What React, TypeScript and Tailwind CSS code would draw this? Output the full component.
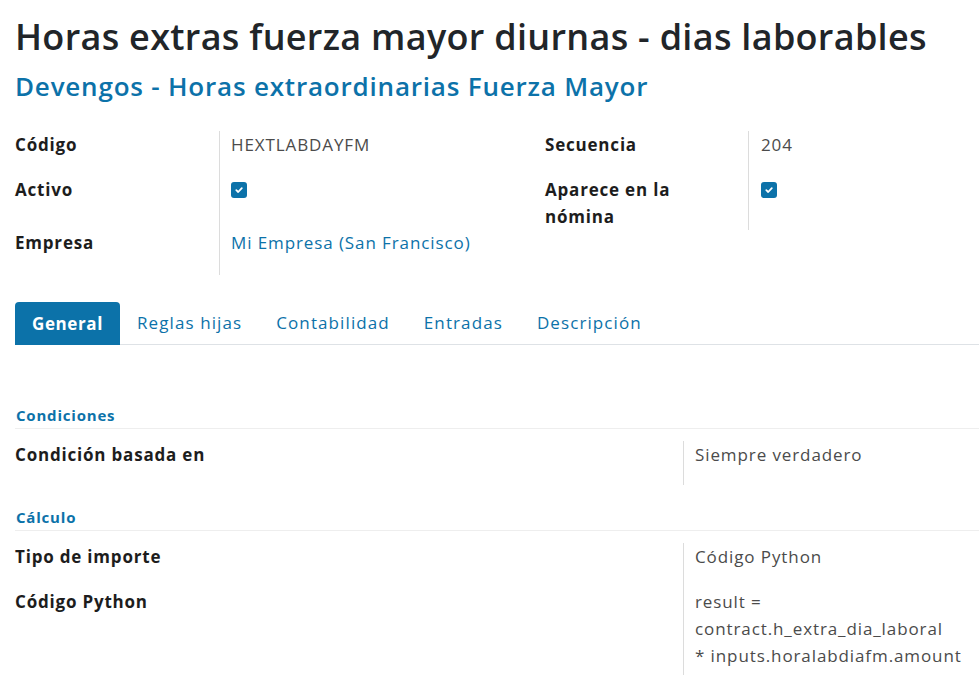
import React from "react";

const Check = () => (
  <span className="inline-flex items-center justify-center w-4 h-4 rounded-[3px] bg-[#0c72a9]">
    <svg width="10" height="10" viewBox="0 0 10 10" fill="none">
      <path d="M2.3 5.2 L4.2 7 L7.8 3.2" stroke="white" strokeWidth="1.8" strokeLinecap="round" strokeLinejoin="round" />
    </svg>
  </span>
);

export default function App() {
  const font = { fontFamily: '"Open Sans", "Noto Sans", sans-serif' };
  const label = "text-[17px] font-bold tracking-[0.8px] text-[#1d1d1d] leading-[27px]";
  const value = "text-[17px] tracking-[0.9px] text-[#4b4b4b] leading-[27px]";
  return (
    <div className="w-[979px] h-[690px] overflow-hidden bg-white text-[#212529]" style={font}>
      <div className="pl-[15px] pt-[15px]">
        <h1 className="text-[36px] leading-[44px] font-semibold text-[#212529] tracking-[0.3px] whitespace-nowrap">
          Horas extras fuerza mayor diurnas - dias laborables
        </h1>
        <h2 className="mt-[11px] text-[26px] leading-[32px] font-semibold text-[#0c72a9] tracking-[0.8px] whitespace-nowrap">
          Devengos - Horas extraordinarias Fuerza Mayor
        </h2>

        <div className="mt-[29px] flex">
          <div className="flex w-[530px]">
            <div className={"w-[204px] flex flex-col " + label}>
              <div className="h-[45px]">Código</div>
              <div className="h-[53px]">Activo</div>
              <div className="h-[46px]">Empresa</div>
            </div>
            <div className="border-l border-[#dcdcdc] pl-[11px] flex flex-col">
              <div className={"h-[45px] " + value}>HEXTLABDAYFM</div>
              <div className="h-[53px] flex items-start pt-[6px]"><Check /></div>
              <div className={"h-[46px] " + value + " !text-[#0c72a9]"}>Mi Empresa (San Francisco)</div>
            </div>
          </div>
          <div className="flex">
            <div className={"w-[203px] flex flex-col " + label}>
              <div className="h-[45px]">Secuencia</div>
              <div className="w-[150px]">Aparece en la nómina</div>
            </div>
            <div className="border-l border-[#dcdcdc] pl-[12px] flex flex-col h-[99px]">
              <div className={"h-[45px] " + value}>204</div>
              <div className="flex items-start pt-[6px]"><Check /></div>
            </div>
          </div>
        </div>

        <div className="mt-[24px] flex items-end border-b border-[#dee2e6] h-[46px]">
          <div className="h-[43px] px-[17px] flex items-center bg-[#0c72a9] text-white font-bold text-[17px] tracking-[0.6px] rounded-t-[4px] -mb-px">
            General
          </div>
          <div className="h-[43px] flex items-center text-[17px] tracking-[1.1px] text-[#0c72a9]">
            <span className="px-[17px]">Reglas hijas</span>
            <span className="px-[17px]">Contabilidad</span>
            <span className="px-[17px]">Entradas</span>
            <span className="px-[17px]">Descripción</span>
          </div>
        </div>

        <div className="mt-[60px] border-b border-[#eeeeee] pb-[3px] pl-px text-[15px] tracking-[0.8px] font-bold text-[#0c72a9] leading-[20px]">
          Condiciones
        </div>
        <div className="mt-[12px] flex">
          <div className={"w-[668px] " + label}>Condición basada en</div>
          <div className={"border-l border-[#dcdcdc] pl-[11px] h-[44px] " + value}>Siempre verdadero</div>
        </div>

        <div className="mt-[22px] border-b border-[#eeeeee] pb-[3px] pl-px text-[15px] tracking-[0.8px] font-bold text-[#0c72a9] leading-[20px]">
          Cálculo
        </div>
        <div className="mt-[12px] flex">
          <div className={"w-[668px] flex flex-col " + label}>
            <div className="h-[45px]">Tipo de importe</div>
            <div>Código Python</div>
          </div>
          <div className={"border-l border-[#dcdcdc] pl-[11px] h-[132px] " + value}>
            <div className="h-[45px]">Código Python</div>
            <div>result =</div>
            <div>contract.h_extra_dia_laboral</div>
            <div>* inputs.horalabdiafm.amount</div>
          </div>
        </div>
      </div>
    </div>
  );
}
